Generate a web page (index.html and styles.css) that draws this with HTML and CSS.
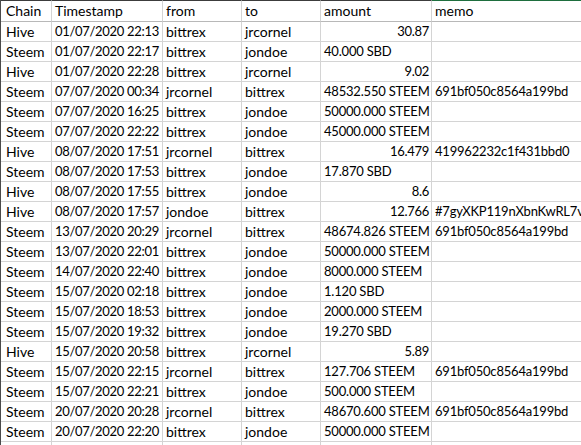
FILE: index.html
```html
<!DOCTYPE html>
<html>
<head>
<meta charset="utf-8">
<link rel="stylesheet" href="styles.css">
</head>
<body>
<div class="sheet">
  <div class="row head">
    <div class="c c1">Chain</div><div class="c c2">Timestamp</div><div class="c c3">from</div><div class="c c4">to</div><div class="c c5">amount</div><div class="c c6 green">memo</div>
  </div>
  <div class="row"><div class="c c1">Hive</div><div class="c c2 num">01/07/2020 22:13</div><div class="c c3">bittrex</div><div class="c c4">jrcornel</div><div class="c c5 num">30.87</div><div class="c c6"></div></div>
  <div class="row"><div class="c c1">Steem</div><div class="c c2 num">01/07/2020 22:17</div><div class="c c3">bittrex</div><div class="c c4">jondoe</div><div class="c c5 txt">40.000 SBD</div><div class="c c6"></div></div>
  <div class="row"><div class="c c1">Hive</div><div class="c c2 num">01/07/2020 22:28</div><div class="c c3">bittrex</div><div class="c c4">jrcornel</div><div class="c c5 num">9.02</div><div class="c c6"></div></div>
  <div class="row"><div class="c c1">Steem</div><div class="c c2 num">07/07/2020 00:34</div><div class="c c3">jrcornel</div><div class="c c4">bittrex</div><div class="c c5 txt">48532.550 STEEM</div><div class="c c6 hash">691bf050c8564a199bd</div></div>
  <div class="row"><div class="c c1">Steem</div><div class="c c2 num">07/07/2020 16:25</div><div class="c c3">bittrex</div><div class="c c4">jondoe</div><div class="c c5 txt">50000.000 STEEM</div><div class="c c6"></div></div>
  <div class="row"><div class="c c1">Steem</div><div class="c c2 num">07/07/2020 22:22</div><div class="c c3">bittrex</div><div class="c c4">jondoe</div><div class="c c5 txt">45000.000 STEEM</div><div class="c c6"></div></div>
  <div class="row"><div class="c c1">Hive</div><div class="c c2 num">08/07/2020 17:51</div><div class="c c3">jrcornel</div><div class="c c4">bittrex</div><div class="c c5 num">16.479</div><div class="c c6 hash">419962232c1f431bbd0</div></div>
  <div class="row"><div class="c c1">Steem</div><div class="c c2 num">08/07/2020 17:53</div><div class="c c3">bittrex</div><div class="c c4">jondoe</div><div class="c c5 txt">17.870 SBD</div><div class="c c6"></div></div>
  <div class="row"><div class="c c1">Hive</div><div class="c c2 num">08/07/2020 17:55</div><div class="c c3">bittrex</div><div class="c c4">jondoe</div><div class="c c5 num">8.6</div><div class="c c6"></div></div>
  <div class="row"><div class="c c1">Hive</div><div class="c c2 num">08/07/2020 17:57</div><div class="c c3">jondoe</div><div class="c c4">bittrex</div><div class="c c5 num">12.766</div><div class="c c6 hash">#7gyXKP119nXbnKwRL7v</div></div>
  <div class="row"><div class="c c1">Steem</div><div class="c c2 num">13/07/2020 20:29</div><div class="c c3">jrcornel</div><div class="c c4">bittrex</div><div class="c c5 txt">48674.826 STEEM</div><div class="c c6 hash">691bf050c8564a199bd</div></div>
  <div class="row"><div class="c c1">Steem</div><div class="c c2 num">13/07/2020 22:01</div><div class="c c3">bittrex</div><div class="c c4">jondoe</div><div class="c c5 txt">50000.000 STEEM</div><div class="c c6"></div></div>
  <div class="row"><div class="c c1">Steem</div><div class="c c2 num">14/07/2020 22:40</div><div class="c c3">bittrex</div><div class="c c4">jondoe</div><div class="c c5 txt">8000.000 STEEM</div><div class="c c6"></div></div>
  <div class="row"><div class="c c1">Steem</div><div class="c c2 num">15/07/2020 02:18</div><div class="c c3">bittrex</div><div class="c c4">jondoe</div><div class="c c5 txt">1.120 SBD</div><div class="c c6"></div></div>
  <div class="row"><div class="c c1">Steem</div><div class="c c2 num">15/07/2020 18:53</div><div class="c c3">bittrex</div><div class="c c4">jondoe</div><div class="c c5 txt">2000.000 STEEM</div><div class="c c6"></div></div>
  <div class="row"><div class="c c1">Steem</div><div class="c c2 num">15/07/2020 19:32</div><div class="c c3">bittrex</div><div class="c c4">jondoe</div><div class="c c5 txt">19.270 SBD</div><div class="c c6"></div></div>
  <div class="row"><div class="c c1">Hive</div><div class="c c2 num">15/07/2020 20:58</div><div class="c c3">bittrex</div><div class="c c4">jrcornel</div><div class="c c5 num">5.89</div><div class="c c6"></div></div>
  <div class="row"><div class="c c1">Steem</div><div class="c c2 num">15/07/2020 22:15</div><div class="c c3">jrcornel</div><div class="c c4">bittrex</div><div class="c c5 txt">127.706 STEEM</div><div class="c c6 hash">691bf050c8564a199bd</div></div>
  <div class="row"><div class="c c1">Steem</div><div class="c c2 num">15/07/2020 22:21</div><div class="c c3">bittrex</div><div class="c c4">jondoe</div><div class="c c5 txt">500.000 STEEM</div><div class="c c6"></div></div>
  <div class="row"><div class="c c1">Steem</div><div class="c c2 num">20/07/2020 20:28</div><div class="c c3">jrcornel</div><div class="c c4">bittrex</div><div class="c c5 txt">48670.600 STEEM</div><div class="c c6 hash">691bf050c8564a199bd</div></div>
  <div class="row"><div class="c c1">Steem</div><div class="c c2 num">20/07/2020 22:20</div><div class="c c3">bittrex</div><div class="c c4">jondoe</div><div class="c c5 txt">50000.000 STEEM</div><div class="c c6"></div></div>
  <div class="row"><div class="c c1"></div><div class="c c2"></div><div class="c c3"></div><div class="c c4"></div><div class="c c5"></div><div class="c c6"></div></div>
</div>
</body>
</html>
```

FILE: styles.css
```css
html, body {
  margin: 0;
  padding: 0;
  background: #ffffff;
  overflow: hidden;
  width: 581px;
  height: 445px;
}
.sheet {
  font-family: "Lato", "Open Sans", sans-serif;
  font-size: 14px;
  color: #000;
  border-left: 1px solid #4a4a4a;
  width: 700px;
}
.row {
  display: grid;
  grid-template-columns: 51px 111px 79px 79px 111px 269px;
  height: 20px;
}
.row.head {
  height: 22px;
}
.head .c {
  border-top: 1px solid #3c3c3c;
  border-bottom-color: #b8b8b8;
}
.head .c.green {
  border-top-color: #1e6e3e;
}
.c {
  box-sizing: border-box;
  border-right: 1px solid #d4d4d4;
  border-bottom: 1px solid #d4d4d4;
  padding: 0 2px 0 3px;
  white-space: nowrap;
  line-height: 19px;
  overflow: visible;
  min-width: 0;
}
.c1 {
  padding-left: 5px;
}
.c6 {
  border-right: none;
}
.num {
  text-align: right;
  font-size: 13px;
  letter-spacing: -0.3px;
  direction: rtl;
  unicode-bidi: plaintext;
}
.c2.num {
  padding-right: 3px;
}
.txt {
  font-size: 13px;
  letter-spacing: -0.2px;
}
.hash {
  font-size: 13px;
  letter-spacing: -0.2px;
}
```
